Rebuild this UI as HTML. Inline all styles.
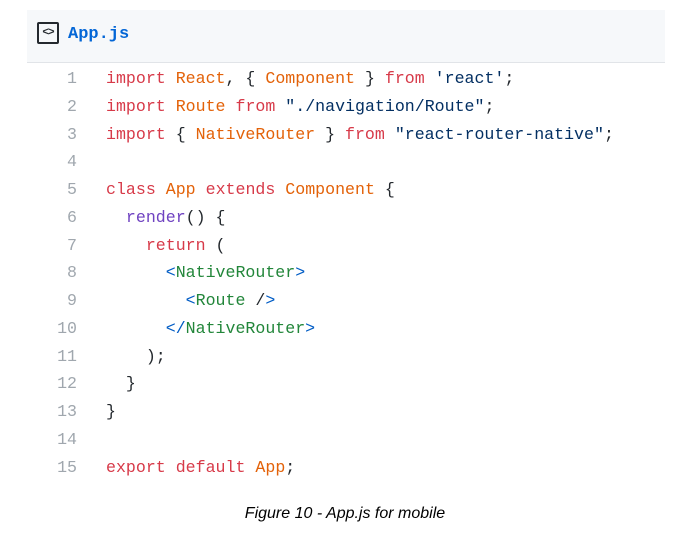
<!DOCTYPE html>
<html><head><meta charset="utf-8"><style>
html,body{margin:0;padding:0;background:#fff;width:690px;height:544px;overflow:hidden}
.hdr{position:absolute;left:27px;top:10px;width:638px;height:52px;background:#f6f8fa;border-bottom:1px solid #e1e4e8}
.icon{position:absolute;left:10px;top:12px;width:18px;height:18px;border:2px solid #24292e;border-radius:2px;font:bold 11px "Liberation Mono",monospace;color:#24292e;text-align:center;line-height:18px;letter-spacing:-1px}
.fn{position:absolute;left:41px;top:14px;font:bold 17px "Liberation Mono",monospace;color:#0366d6;line-height:22px}
.code{position:absolute;left:0;top:66px;font:16.6px "Liberation Mono",monospace;color:#24292e}
.ln{position:absolute;left:0;width:77px;text-align:right;color:#a0a7ae}
.tx{position:absolute;left:106px;white-space:pre}
.k{color:#d73a49}.o{color:#e36209}.s{color:#032f62}.g{color:#22863a}.p{color:#6f42c1}.b{color:#005cc5}
.cap{position:absolute;left:0;width:690px;top:505px;text-align:center;font:italic 16px "Liberation Sans",Arial,sans-serif;color:#000}
</style></head><body>
<div class="hdr"><div class="icon">&lt;&gt;</div><div class="fn">App.js</div></div>
<div class="code">
<div class="ln" style="top:3px">1</div><div class="tx" style="top:3px"><span class="k">import</span> <span class="o">React</span>, { <span class="o">Component</span> } <span class="k">from</span> <span class="s">'react'</span>;</div>
<div class="ln" style="top:31px">2</div><div class="tx" style="top:31px"><span class="k">import</span> <span class="o">Route</span> <span class="k">from</span> <span class="s">"./navigation/Route"</span>;</div>
<div class="ln" style="top:59px">3</div><div class="tx" style="top:59px"><span class="k">import</span> { <span class="o">NativeRouter</span> } <span class="k">from</span> <span class="s">"react-router-native"</span>;</div>
<div class="ln" style="top:86px">4</div>
<div class="ln" style="top:114px">5</div><div class="tx" style="top:114px"><span class="k">class</span> <span class="o">App</span> <span class="k">extends</span> <span class="o">Component</span> {</div>
<div class="ln" style="top:142px">6</div><div class="tx" style="top:142px">  <span class="p">render</span>() {</div>
<div class="ln" style="top:170px">7</div><div class="tx" style="top:170px">    <span class="k">return</span> (</div>
<div class="ln" style="top:197px">8</div><div class="tx" style="top:197px">      <span class="b">&lt;</span><span class="g">NativeRouter</span><span class="b">&gt;</span></div>
<div class="ln" style="top:225px">9</div><div class="tx" style="top:225px">        <span class="b">&lt;</span><span class="g">Route</span> /<span class="b">&gt;</span></div>
<div class="ln" style="top:253px">10</div><div class="tx" style="top:253px">      <span class="b">&lt;/</span><span class="g">NativeRouter</span><span class="b">&gt;</span></div>
<div class="ln" style="top:281px">11</div><div class="tx" style="top:281px">    );</div>
<div class="ln" style="top:308px">12</div><div class="tx" style="top:308px">  }</div>
<div class="ln" style="top:336px">13</div><div class="tx" style="top:336px">}</div>
<div class="ln" style="top:364px">14</div>
<div class="ln" style="top:392px">15</div><div class="tx" style="top:392px"><span class="k">export</span> <span class="k">default</span> <span class="o">App</span>;</div>
</div>
<div class="cap">Figure 10 - App.js for mobile</div>
</body></html>
